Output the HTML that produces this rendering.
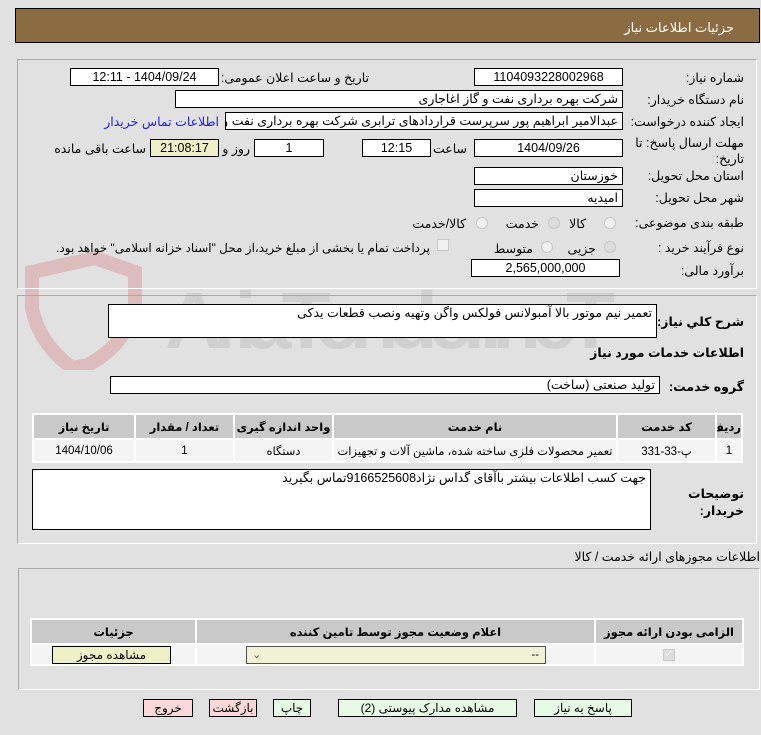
<!DOCTYPE html>
<html><head><meta charset="utf-8"><style>
*{margin:0;padding:0;box-sizing:border-box}
body{width:761px;height:735px;background:#e1e1e1;font-family:"Liberation Sans","DejaVu Sans",sans-serif;font-size:12px;color:#000;position:relative;overflow:hidden}
.a{position:absolute;white-space:nowrap}
.box{position:absolute;background:#fff;border:1px solid #000;padding:0 4px;line-height:16px;height:18px;direction:rtl;text-align:center;font-size:12.5px;white-space:nowrap;overflow:hidden}
.l{position:absolute;white-space:nowrap;direction:rtl;text-align:right;font-size:12.5px}
.panel{position:absolute;border:1px solid #a9a9a9;border-right-color:#fff;border-bottom-color:#fff}
.rad{position:absolute;width:12px;height:12px;border-radius:50%;border:1px solid #c8c8c8;background:#f0f0f0}
table{border-collapse:separate;border-spacing:2px;position:absolute;background:#fff}
td,th{text-align:center;font-size:11.5px;direction:rtl;white-space:nowrap;overflow:hidden}
th{background:#c9c9c9;font-weight:bold}
td{background:#f4f4f4}
.btn{position:absolute;border:1px solid #000;text-align:center;font-size:12px;line-height:16px;direction:rtl;white-space:nowrap}
</style></head><body>
<svg class="a" style="left:0;top:250px" width="700" height="120">
<path d="M32 22 L95 8 L135 22 L135 58 Q125 95 88 115 L72 118 Q38 92 32 58 Z" fill="none" stroke="#dcbcbc" stroke-width="14"/>
<text x="165" y="98" font-family="Liberation Sans" font-weight="bold" font-size="80" fill="#d0d0d0" textLength="450">AriaTender.neT</text>
</svg>
<div class="a" style="left:15px;top:8px;width:745px;height:35px;background:#8b6c42;border:1px solid #000"></div>
<div class="l" style="right:27px;top:20px;color:#fff;font-size:13px">جزئیات اطلاعات نیاز</div>

<div class="panel" style="left:17px;top:59px;width:740px;height:230px"></div>
<div class="l" style="right:17px;top:70px">شماره نیاز:</div>
<div class="box" style="left:474px;top:68px;width:149px">1104093228002968</div>
<div class="l" style="right:392px;top:70px">تاریخ و ساعت اعلان عمومی:</div>
<div class="box" style="left:70px;top:68px;width:149px">1404/09/24 - 12:11</div>

<div class="l" style="right:17px;top:92px">نام دستگاه خریدار:</div>
<div class="box" style="left:175px;top:90px;width:448px;text-align:right">شرکت بهره برداری نفت و گاز اغاجاری</div>

<div class="l" style="right:17px;top:114px">ایجاد کننده درخواست:</div>
<div class="box" style="left:225px;top:112px;width:398px;text-align:right">عبدالامیر ابراهیم پور سرپرست قراردادهای ترابری شرکت بهره برداری نفت و گاز</div>
<div class="l" style="right:542px;top:114px;color:#2020e0">اطلاعات تماس خریدار</div>

<div class="l" style="right:17px;top:135px;line-height:16px">مهلت ارسال پاسخ: تا<br>تاریخ:</div>
<div class="box" style="left:474px;top:139px;width:149px">1404/09/26</div>
<div class="l" style="right:294px;top:141px">ساعت</div>
<div class="box" style="left:362px;top:139px;width:69px">12:15</div>
<div class="box" style="left:254px;top:139px;width:70px">1</div>
<div class="l" style="right:511px;top:141px">روز و</div>
<div class="box" style="left:150px;top:139px;width:69px;background:#f0f0c8">21:08:17</div>
<div class="l" style="right:615px;top:141px">ساعت باقی مانده</div>

<div class="l" style="right:17px;top:168px">استان محل تحویل:</div>
<div class="box" style="left:474px;top:167px;width:149px;text-align:right">خوزستان</div>
<div class="l" style="right:17px;top:190px">شهر محل تحویل:</div>
<div class="box" style="left:474px;top:189px;width:149px;text-align:right">امیدیه</div>

<div class="l" style="right:17px;top:215px">طبقه بندی موضوعی:</div>
<div class="rad" style="left:604px;top:217px"></div><div class="l" style="right:175px;top:216px">کالا</div>
<div class="rad" style="left:548px;top:217px;background:#ddd"></div><div class="l" style="right:222px;top:216px">خدمت</div>
<div class="rad" style="left:476px;top:217px"></div><div class="l" style="right:295px;top:216px">کالا/خدمت</div>

<div class="l" style="right:17px;top:240px">نوع فرآیند خرید :</div>
<div class="rad" style="left:604px;top:241px;background:#ddd"></div><div class="l" style="right:165px;top:241px">جزیی</div>
<div class="rad" style="left:541px;top:241px"></div><div class="l" style="right:228px;top:241px">متوسط</div>
<div class="a" style="left:437px;top:239px;width:12px;height:12px;border:1px solid #c8c8c8;background:#f0f0f0"></div>
<div class="l" style="right:331px;top:241px;font-size:12px">پرداخت تمام یا بخشی از مبلغ خرید،از محل "اسناد خزانه اسلامی" خواهد بود.</div>

<div class="l" style="right:17px;top:263px">برآورد مالی:</div>
<div class="box" style="left:471px;top:259px;width:149px">2,565,000,000</div>

<div class="panel" style="left:17px;top:295px;width:740px;height:249px"></div>
<div class="l" style="right:17px;top:314px;font-weight:bold">شرح کلي نياز:</div>
<div class="box" style="left:108px;top:304px;width:549px;height:34px;text-align:right">تعمیر نیم موتور بالا آمبولانس فولکس واگن وتهیه ونصب قطعات یدکی</div>
<div class="l" style="right:17px;top:345px;font-weight:bold">اطلاعات خدمات مورد نياز</div>
<div class="l" style="right:17px;top:379px;font-weight:bold">گروه خدمت:</div>
<div class="box" style="left:110px;top:376px;width:550px;height:18px;text-align:right">تولید صنعتی (ساخت)</div>

<table style="left:32px;top:413px;width:711px;height:50px;table-layout:fixed">
<tr style="height:23px"><th style="width:100px">تاریخ نیاز</th><th style="width:97px">تعداد / مقدار</th><th style="width:97px">واحد اندازه گیری</th><th style="width:282px">نام خدمت</th><th style="width:97px">کد خدمت</th><th>ردیف</th></tr>
<tr><td>1404/10/06</td><td>1</td><td>دستگاه</td><td>تعمیر محصولات فلزی ساخته شده، ماشین آلات و تجهیزات</td><td>پ-33-331</td><td>1</td></tr>
</table>

<div class="l" style="right:17px;top:486px;line-height:17px;font-weight:bold">توضیحات<br>خریدار:</div>
<div class="box" style="left:32px;top:469px;width:619px;height:61px;text-align:right">جهت کسب اطلاعات بیشتر باآقای گداس نژاد9166525608تماس بگیرید</div>

<div class="l" style="right:1px;top:549px">اطلاعات مجوزهای ارائه خدمت / کالا</div>
<div class="panel" style="left:18px;top:568px;width:742px;height:122px"></div>
<table style="left:30px;top:618px;width:714px;height:48px;table-layout:fixed">
<tr style="height:23px"><th style="width:163px">جزئیات</th><th>اعلام وضعیت مجوز توسط تامین کننده</th><th style="width:146px">الزامی بودن ارائه مجوز</th></tr>
<tr><td></td><td></td><td><span style="display:inline-block;width:12px;height:12px;background:#ddd;border:1px solid #ccc;color:#fff;font-size:10px;line-height:10px">✓</span></td></tr>
</table>
<div class="btn" style="left:52px;top:646px;width:119px;height:18px;background:#f0f0c8">مشاهده مجوز</div>
<div class="a" style="left:246px;top:646px;width:300px;height:18px;border:1px solid #555;background:#f3f0d8;font-size:11px;line-height:16px"><span style="position:absolute;left:5px;color:#666">⌄</span><span style="position:absolute;right:6px">--</span></div>

<div class="btn" style="left:534px;top:699px;width:98px;height:18px;background:#e6fae6">پاسخ به نیاز</div>
<div class="btn" style="left:338px;top:699px;width:179px;height:18px;background:#e6fae6">مشاهده مدارک پیوستی (2)</div>
<div class="btn" style="left:273px;top:699px;width:38px;height:18px;background:#e6fae6">چاپ</div>
<div class="btn" style="left:209px;top:699px;width:48px;height:18px;background:#fdd8d8">بازگشت</div>
<div class="btn" style="left:143px;top:699px;width:50px;height:18px;background:#fdd8d8">خروج</div>
</body></html>
